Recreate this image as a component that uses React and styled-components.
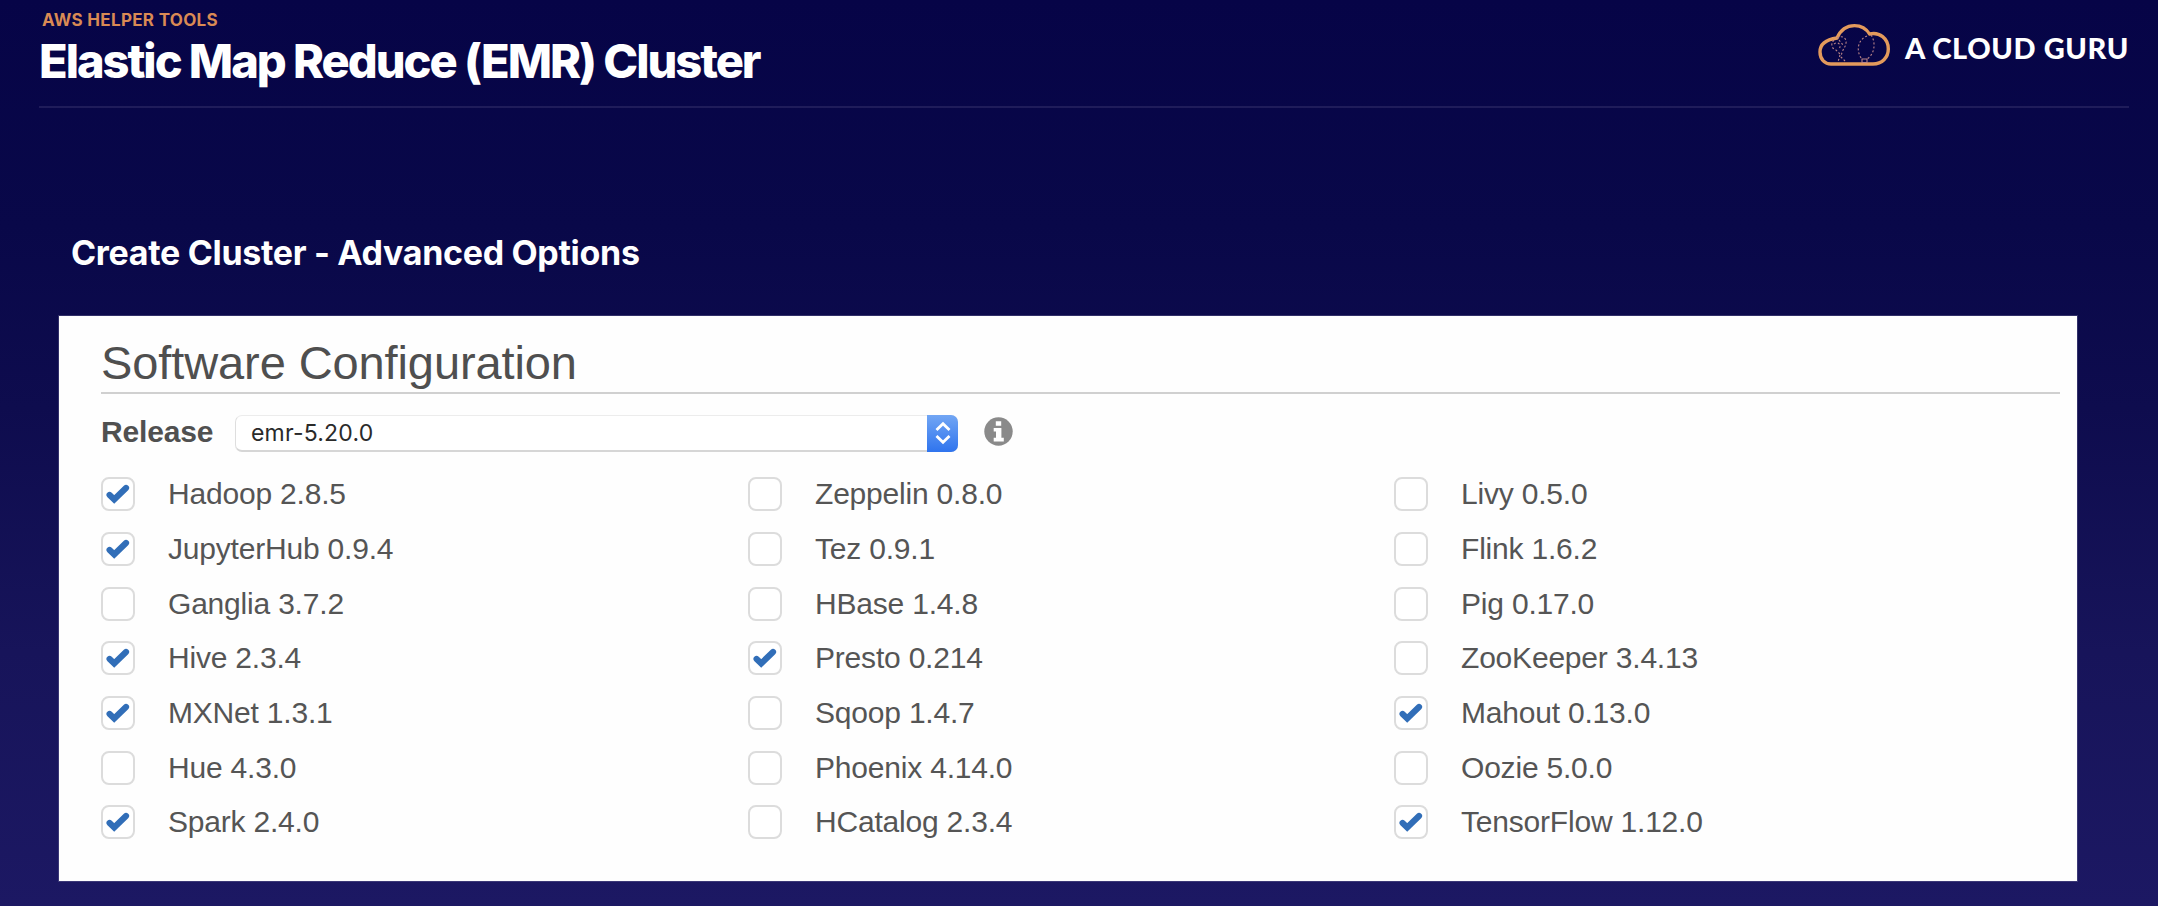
import React, { useState } from "react";
import styled, { createGlobalStyle } from "styled-components";

const GlobalStyle = createGlobalStyle`
  *, *::before, *::after { box-sizing: border-box; }
  body { margin: 0; }
`;

const sans = `"Liberation Sans", Arial, sans-serif`;
const inter = `Inter, "Liberation Sans", sans-serif`;

const Slide = styled.div`
  width: 2158px;
  height: 906px;
  overflow: hidden;
  background: linear-gradient(180deg, #060447 0%, #090849 25%, #0e0c4e 45%, #17145a 72%, #1c1863 100%);
  font-family: ${sans};
`;

const Header = styled.header`
  display: flex;
  justify-content: space-between;
  height: 108px;
  margin: 0 29px 0 39px;
  border-bottom: 2px solid #1f1c5a;
`;

const Titles = styled.div`
  padding-top: 9px;
  font-family: ${inter};
  white-space: nowrap;
`;

const Kicker = styled.div`
  padding-left: 3px;
  font-size: 17px;
  line-height: 22px;
  font-weight: 700;
  letter-spacing: 0.3px;
  color: #d98a54;
`;

const Title = styled.h1`
  margin: 0;
  font-size: 47px;
  line-height: 60px;
  font-weight: 800;
  letter-spacing: -2.03px;
  color: #fff;
`;

const Brand = styled.div`
  display: flex;
  align-items: flex-start;
  padding-top: 22px;
`;

const CloudMark = styled.svg`
  width: 75px;
  height: 46px;
  margin-right: 14px;
`;

const BrandName = styled.span`
  padding-top: 8px;
  font-family: Lato, ${sans};
  font-size: 29px;
  line-height: 36px;
  font-weight: 900;
  letter-spacing: 0.6px;
  color: #fff;
  white-space: nowrap;
`;

const Subtitle = styled.h2`
  margin: 124px 0 0 71px;
  height: 84px;
  font-family: ${inter};
  font-size: 34px;
  line-height: 42px;
  font-weight: 700;
  letter-spacing: -0.32px;
  color: #fff;
`;

const Panel = styled.main`
  width: 2018px;
  height: 565px;
  margin-left: 59px;
  padding: 19px 17px 0 42px;
  background: #fefefe;
  box-shadow: 0 0 0 1px rgba(120, 118, 160, 0.35);
`;

const PanelTitle = styled.h3`
  margin: 0;
  height: 59px;
  border-bottom: 2px solid #d0d0d0;
  font-size: 47px;
  line-height: 55px;
  font-weight: 400;
  letter-spacing: -0.1px;
  color: #4f4f4f;
`;

const ReleaseRow = styled.div`
  display: flex;
  align-items: center;
  height: 40px;
  margin-top: 19px;
`;

const ReleaseLabel = styled.label`
  width: 134px;
  padding-bottom: 2px;
  font-size: 30px;
  line-height: 34px;
  font-weight: 700;
  letter-spacing: -0.15px;
  color: #505050;
`;

const Select = styled.button`
  display: flex;
  align-items: stretch;
  justify-content: space-between;
  width: 723px;
  height: 37px;
  padding: 0;
  border: 1px solid #dedede;
  border-top-color: #ececec;
  border-bottom: 2px solid #d6d6d6;
  border-radius: 7px;
  background: #fff;
`;

const SelectValue = styled.span`
  padding-left: 15px;
  font-family: ${inter};
  font-size: 23px;
  line-height: 35px;
  letter-spacing: 0.2px;
  color: #2a2a2a;
`;

const Stepper = styled.span`
  display: flex;
  align-items: center;
  justify-content: center;
  width: 31px;
  margin: -1px -1px -2px 0;
  border-radius: 0 7px 7px 0;
  background: linear-gradient(180deg, #72a6f4, #2f74ee);
`;

const InfoIcon = styled.svg`
  width: 29px;
  height: 29px;
  margin: 0 0 4px 26px;
`;

const Options = styled.div`
  display: grid;
  grid-template-columns: 647px 646px 1fr;
  grid-template-rows: repeat(7, 54.67px);
  grid-auto-flow: column;
  margin-top: 14px;
`;

const Option = styled.label`
  display: flex;
  align-items: center;
  font-size: 30px;
  line-height: 34px;
  letter-spacing: -0.2px;
  color: #555;
`;

const Box = styled.span`
  display: flex;
  align-items: center;
  justify-content: center;
  width: 34px;
  height: 34px;
  margin-right: 33px;
  border: 2px solid #dcdcdc;
  border-radius: 8px;
  background: #fff;
`;

const HiddenInput = styled.input`
  appearance: none;
  width: 0;
  height: 0;
  margin: 0;
`;

const applications = [
  ["Hadoop 2.8.5", true],
  ["JupyterHub 0.9.4", true],
  ["Ganglia 3.7.2", false],
  ["Hive 2.3.4", true],
  ["MXNet 1.3.1", true],
  ["Hue 4.3.0", false],
  ["Spark 2.4.0", true],
  ["Zeppelin 0.8.0", false],
  ["Tez 0.9.1", false],
  ["HBase 1.4.8", false],
  ["Presto 0.214", true],
  ["Sqoop 1.4.7", false],
  ["Phoenix 4.14.0", false],
  ["HCatalog 2.3.4", false],
  ["Livy 0.5.0", false],
  ["Flink 1.6.2", false],
  ["Pig 0.17.0", false],
  ["ZooKeeper 3.4.13", false],
  ["Mahout 0.13.0", true],
  ["Oozie 5.0.0", false],
  ["TensorFlow 1.12.0", true],
];

function Application({ name, initial }) {
  const [checked, setChecked] = useState(initial);
  return (
    <Option>
      <HiddenInput type="checkbox" checked={checked} onChange={() => setChecked(!checked)} />
      <Box>
        {checked && (
          <svg width="26" height="22" viewBox="0 0 26 22" fill="none">
            <path d="M4.6 12 L9.2 16.4 L21 5" stroke="#316eb8" strokeWidth="6.2" strokeLinecap="round" />
          </svg>
        )}
      </Box>
      {name}
    </Option>
  );
}

function Cloud() {
  return (
    <CloudMark viewBox="0 0 75 46" fill="none">
      <path
        d="M15 42 H57 C66 42 72.3 35.5 72.3 27 C72.3 16.5 63.5 9.5 53.5 12 C50.5 7 45 3.6 38.5 3.6 C31 3.6 24.5 8 21 16 C10 17.5 4 22.5 4 30 C4 37.5 9 42 15 42 Z"
        stroke="#e39a5c"
        strokeWidth="3.4"
        strokeLinejoin="round"
      />
      <g stroke="#b98487" strokeWidth="1.1" strokeDasharray="2 2">
        <path d="M21 16 C26 13 31 16 30 21 C30 25 26 27 25 35 L29 39" />
        <path d="M18 18 C14 22 16 27 20 28 L25 33 M18 22 C22 19 26 23 23 27 M23 18 L27 23 M24 33 L22 40" />
        <path d="M51 14 C41 18 40 30 46 37 M55 13 C60 20 59 32 51 37" />
        <path d="M46 37 H51 V40.5 H46 Z" strokeDasharray="none" />
      </g>
    </CloudMark>
  );
}

export default function App() {
  return (
    <Slide>
      <GlobalStyle />
      <Header>
        <Titles>
          <Kicker>AWS HELPER TOOLS</Kicker>
          <Title>Elastic Map Reduce (EMR) Cluster</Title>
        </Titles>
        <Brand>
          <Cloud />
          <BrandName>A CLOUD GURU</BrandName>
        </Brand>
      </Header>
      <Subtitle>Create Cluster - Advanced Options</Subtitle>
      <Panel>
        <PanelTitle>Software Configuration</PanelTitle>
        <ReleaseRow>
          <ReleaseLabel>Release</ReleaseLabel>
          <Select type="button">
            <SelectValue>emr-5.20.0</SelectValue>
            <Stepper>
              <svg width="16" height="24" viewBox="0 0 16 24" fill="none" stroke="#fff" strokeWidth="2.8">
                <path d="M1.5 9 L8 2.8 L14.5 9" />
                <path d="M1.5 15 L8 21.2 L14.5 15" />
              </svg>
            </Stepper>
          </Select>
          <InfoIcon viewBox="0 0 29 29">
            <circle cx="14.5" cy="14.5" r="14.2" fill="#8a8a8a" />
            <path d="M11.8 4.2 H17.2 V8.8 H11.8 Z M9.7 11 H17.4 V20.7 H19.8 V24.5 H9.7 V20.7 H12 V14.6 H9.7 Z" fill="#fff" />
          </InfoIcon>
        </ReleaseRow>
        <Options>
          {applications.map(([name, initial]) => (
            <Application key={name} name={name} initial={initial} />
          ))}
        </Options>
      </Panel>
    </Slide>
  );
}
